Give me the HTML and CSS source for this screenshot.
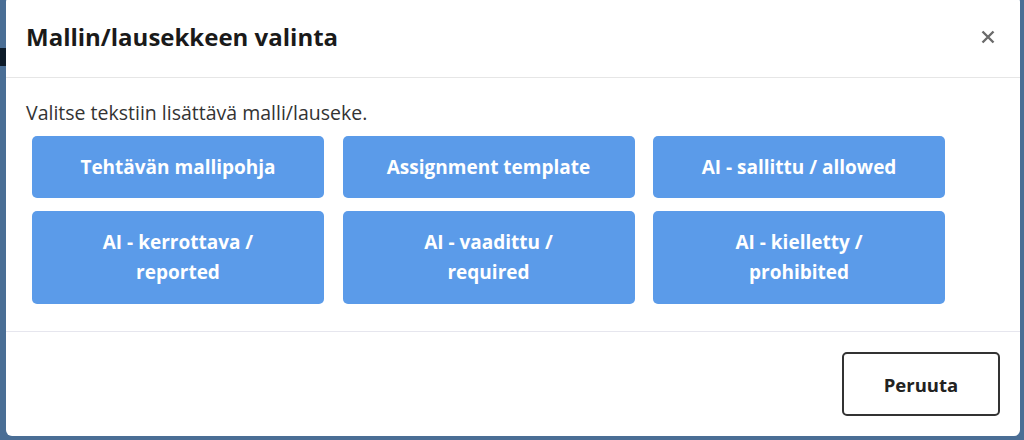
FILE: index.html
```html
<!DOCTYPE html>
<html lang="fi">
<head>
<meta charset="utf-8">
<title>Mallin/lausekkeen valinta</title>
<link rel="stylesheet" href="styles.css">
</head>
<body>
<div class="page-bit"></div>
<div class="modal">
  <div class="modal-header">
    <h2 class="modal-title">Mallin/lausekkeen valinta</h2>
    <button class="close" aria-label="Sulje">
      <svg width="14" height="14" viewBox="0 0 14 14"><path d="M1.5 1.5 L12.5 12.5 M12.5 1.5 L1.5 12.5" stroke="#6b6b6b" stroke-width="2.4" stroke-linecap="butt"/></svg>
    </button>
  </div>
  <div class="modal-body">
    <p class="intro">Valitse tekstiin lisättävä malli/lauseke.</p>
    <div class="choices">
      <button class="choice">Tehtävän mallipohja</button>
      <button class="choice">Assignment template</button>
      <button class="choice">AI - sallittu / allowed</button>
      <button class="choice">AI - kerrottava /<br>reported</button>
      <button class="choice">AI - vaadittu /<br>required</button>
      <button class="choice">AI - kielletty /<br>prohibited</button>
    </div>
  </div>
  <div class="modal-footer">
    <button class="cancel">Peruuta</button>
  </div>
</div>
</body>
</html>
```

FILE: styles.css
```css
html, body {
  margin: 0;
  padding: 0;
}
body {
  width: 1024px;
  height: 440px;
  overflow: hidden;
  background: #4a6e95;
  font-family: "Open Sans", "Noto Sans", sans-serif;
  position: relative;
}
.page-bit {
  position: absolute;
  left: 0;
  top: 48px;
  width: 6px;
  height: 18px;
  background: #0d1b29;
}
.modal {
  position: absolute;
  left: 6px;
  top: -4px;
  width: 1014px;
  height: 440px;
  background: #fff;
  border-radius: 6px;
  display: flex;
  flex-direction: column;
}
.modal-header {
  height: 82px;
  box-sizing: border-box;
  border-bottom: 1px solid #e6e6e6;
  display: flex;
  align-items: center;
  justify-content: space-between;
  padding: 0 25px 0 20px;
}
.modal-title {
  margin: 0;
  font-size: 24px;
  font-weight: 700;
  color: #1a1a1a;
}
.close {
  border: 0;
  background: none;
  padding: 0;
  width: 14px;
  height: 14px;
  display: flex;
}
.modal-body {
  padding: 22px 20px 27px 20px;
  border-bottom: 1px solid #e6e6ee;
}
.intro {
  margin: 0 0 10px 0;
  font-size: 19.5px;
  line-height: 26px;
  color: #333;
}
.choices {
  display: grid;
  grid-template-columns: repeat(3, 292px);
  column-gap: 18.5px;
  row-gap: 13px;
  padding-left: 6px;
}
.choice {
  background: #5b9be9;
  color: #fff;
  border: 0;
  border-radius: 5px;
  padding: 16px 10px;
  font-family: inherit;
  font-size: 19px;
  font-weight: 700;
  line-height: 30px;
  text-align: center;
}
.choice:nth-child(n+4) {
  padding-bottom: 17px;
}
.modal-footer {
  flex: 1;
  display: flex;
  justify-content: flex-end;
  align-items: flex-start;
  padding: 20px 20px 0 0;
}
.cancel {
  width: 158px;
  height: 64px;
  background: #fff;
  border: 2px solid #333;
  border-radius: 5px;
  font-family: inherit;
  font-size: 18.5px;
  font-weight: 700;
  color: #222;
}
```
